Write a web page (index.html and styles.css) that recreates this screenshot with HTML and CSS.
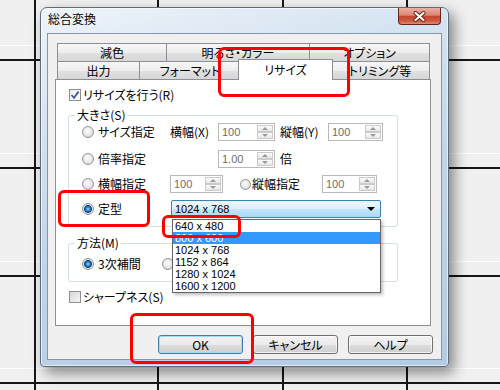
FILE: index.html
```html
<!DOCTYPE html>
<html lang="ja">

<head>
    <meta charset="UTF-8" />
    <meta name="viewport" content="width=device-width, initial-scale=1.0" />
    <title>総合変換</title>
    <link rel="stylesheet" href="styles.css">
</head>

<body>
    <div class="sheet">
        <div class="cell"></div><div class="cell"></div><div class="cell"></div><div class="cell"></div><div class="cell"></div>
        <div class="cell"></div><div class="cell"></div><div class="cell"></div><div class="cell"></div><div class="cell"></div>
        <div class="cell"></div><div class="cell"></div><div class="cell"></div><div class="cell"></div><div class="cell"></div>
        <div class="cell"></div><div class="cell"></div><div class="cell"></div><div class="cell"></div><div class="cell"></div>
        <div class="cell"></div><div class="cell"></div><div class="cell"></div><div class="cell"></div><div class="cell"></div>
    </div>

    <div class="dialog">
        <div class="titlebar">
            <span class="title">総合変換</span>
            <button class="close">
                <svg width="13" height="11" viewBox="0 0 13 11">
                    <path d="M2.5 2 L10.5 9 M10.5 2 L2.5 9" stroke="#5a2118" stroke-width="4" stroke-linecap="round" />
                    <path d="M2.5 2 L10.5 9 M10.5 2 L2.5 9" stroke="#fff" stroke-width="2.2" stroke-linecap="round" />
                </svg>
            </button>
        </div>

        <div class="client">
            <div class="tabs">
                <div class="tab-row">
                    <div class="tab t-gen">減色</div>
                    <div class="tab t-bright">明るさ・カラー</div>
                    <div class="tab t-opt">オプション</div>
                </div>
                <div class="tab-row">
                    <div class="tab t-out">出力</div>
                    <div class="tab t-fmt">フォーマット</div>
                    <div class="tab t-resize active">リサイズ</div>
                    <div class="tab t-trim">トリミング等</div>
                </div>
            </div>

            <div class="panel">
                <label class="check">
                    <span class="box on">
                        <svg width="10" height="10" viewBox="0 0 10 10">
                            <path d="M1.5 5 L4 7.8 L8.6 1.6" fill="none" stroke="#3d5a9e" stroke-width="1.8" />
                        </svg>
                    </span>
                    リサイズを行う(R)
                </label>

                <fieldset class="group group-size">
                    <legend>大きさ(S)</legend>
                    <div class="rows">
                        <div class="row">
                            <span class="opt w88"><span class="radio"></span>サイズ指定</span>
                            <span class="cap w48">横幅(X)</span>
                            <span class="spin w57"><span class="val">100</span><span class="btns"><i class="up"></i><i class="down"></i></span></span>
                            <span class="cap w48 ml5">縦幅(Y)</span>
                            <span class="spin w55"><span class="val">100</span><span class="btns"><i class="up"></i><i class="down"></i></span></span>
                        </div>
                        <div class="row">
                            <span class="opt w136"><span class="radio"></span>倍率指定</span>
                            <span class="spin w57"><span class="val">1.00</span><span class="btns"><i class="up"></i><i class="down"></i></span></span>
                            <span class="cap ml5">倍</span>
                        </div>
                        <div class="row">
                            <span class="opt w88"><span class="radio"></span>横幅指定</span>
                            <span class="spin w53"><span class="val">100</span><span class="btns"><i class="up"></i><i class="down"></i></span></span>
                            <span class="opt tight w82 ml17"><span class="radio small"></span>縦幅指定</span>
                            <span class="spin w55"><span class="val">100</span><span class="btns"><i class="up"></i><i class="down"></i></span></span>
                        </div>
                        <div class="row">
                            <span class="opt w89"><span class="radio on"></span>定型</span>
                            <div class="combo">
                                <span>1024 x 768</span>
                                <span class="arrow"></span>
                                <ul class="list">
                                    <li>640 x 480</li>
                                    <li class="selected">800 x 600</li>
                                    <li>1024 x 768</li>
                                    <li>1152 x 864</li>
                                    <li>1280 x 1024</li>
                                    <li>1600 x 1200</li>
                                </ul>
                            </div>
                        </div>
                    </div>
                </fieldset>

                <fieldset class="group group-method">
                    <legend>方法(M)</legend>
                    <div class="rows">
                        <div class="row">
                            <span class="opt w80"><span class="radio on"></span>3次補間</span>
                            <!-- second option sits under the open list -->
                            <span class="radio"></span>
                        </div>
                    </div>
                </fieldset>

                <label class="check check-sharp">
                    <span class="box"></span>
                    シャープネス(S)
                </label>
            </div>

            <div class="actions">
                <button class="btn default">OK</button>
                <button class="btn">キャンセル</button>
                <button class="btn">ヘルプ</button>
            </div>
        </div>
    </div>

    <!-- red annotation frames -->
    <div class="mark mark-tab"></div>
    <div class="mark mark-fixed"></div>
    <div class="mark mark-item"></div>
    <div class="mark mark-ok"></div>
</body>

</html>
```

FILE: styles.css
```css
body {
    margin: 0;
    width: 500px;
    height: 390px;
    overflow: hidden;
    background-color: #f0f0f0;
    font-family: "Noto Sans CJK JP", sans-serif;
    font-size: 12px;
    font-feature-settings: "palt";
    color: #000;
}

/* spreadsheet behind the dialog */
.sheet {
    display: grid;
    width: 500px;
    height: 390px;
    grid-template-columns: 36px 123px 125px 124px 1fr;
    grid-template-rows: 61px 108px 108px 107px 1fr;
}

.cell {
    border-right: 2px solid #161616;
    border-bottom: 2px solid #161616;
    background: linear-gradient(to top, transparent 13px, #fdfdfd 13px, #fdfdfd 14px, transparent 14px);
}

.cell:nth-child(5n) {
    border-right: none;
}

.cell:nth-child(n+21) {
    border-bottom: none;
    background: none;
}

/* window */
.dialog {
    position: absolute;
    left: 40px;
    top: 7px;
    width: 409px;
    height: 360px;
    box-sizing: border-box;
    padding: 0 6px 6px 6px;
    display: flex;
    flex-direction: column;
    border: 1px solid #5d6d7e;
    border-radius: 7px 7px 4px 4px;
    background: linear-gradient(165deg, #eef4fa 0%, #d5e3f1 25%, #c0d5ea 55%, #b3cbe4 100%);
    box-shadow: 5px 6px 14px rgba(0, 0, 0, 0.45), inset 0 0 0 1px rgba(255, 255, 255, 0.6);
}

.titlebar {
    display: flex;
    align-items: flex-start;
    height: 25px;
    flex: none;
}

.title {
    margin: 1px 0 0 1px;
    line-height: 20px;
    text-shadow: 0 0 6px #fff;
}

.close {
    margin-left: auto;
    margin-right: 1px;
    width: 43px;
    height: 17px;
    padding: 0;
    display: flex;
    align-items: center;
    justify-content: center;
    border: 1px solid #5e261d;
    border-top: none;
    border-radius: 0 0 4px 4px;
    background: linear-gradient(#eab0a3 0%, #dc8573 45%, #c5452f 52%, #cf573c 80%, #e58a6c 100%);
}

.client {
    flex: 1;
    display: flex;
    flex-direction: column;
    padding: 9px 10px 0 7px;
    border: 1px solid #8797a8;
    background: #f0f0f0;
}

/* tabs */
.tab-row {
    display: flex;
    height: 18px;
    margin-left: 2px;
}

.tab {
    box-sizing: border-box;
    height: 18px;
    margin-left: -1px;
    border: 1px solid #8c8f95;
    border-bottom: none;
    line-height: 17px;
    text-align: center;
    white-space: nowrap;
    background: linear-gradient(#f7f7f7, #ededed 50%, #e1e1e1 52%, #d7d7d7);
}

.tab:first-child {
    margin-left: 0;
}

.t-gen { width: 110px; }
.t-bright { width: 144px; }
.t-opt { width: 121px; }
.t-out { width: 83px; }
.t-fmt { width: 102px; }
.t-trim { width: 100px; margin-left: -1px; }

.tab.active {
    position: relative;
    z-index: 2;
    width: 95px;
    height: 21px;
    margin: -2px -2px -1px -3px;
    line-height: 20px;
    background: #fff;
}

.panel {
    height: 247px;
    box-sizing: border-box;
    padding: 8px 0 0 12px;
    border: 1px solid #8c8f95;
    background: #fff;
}

/* checkbox and radio */
.check {
    display: flex;
    align-items: center;
    gap: 2px;
    margin-left: 1px;
    line-height: 14px;
}

.check-sharp {
    margin-top: 8px;
}

.box {
    flex: none;
    width: 12px;
    height: 12px;
    box-sizing: border-box;
    display: flex;
    align-items: center;
    justify-content: center;
    border: 1px solid #8e8f8f;
    background: linear-gradient(135deg, #d6d6d6, #f7f7f7);
}

.box.on {
    background: linear-gradient(135deg, #ececec, #fff);
}

.radio {
    flex: none;
    width: 12px;
    height: 12px;
    box-sizing: border-box;
    border-radius: 50%;
    border: 1px solid #959595;
    background: radial-gradient(circle at 45% 40%, #fdfdfd 0, #ebebeb 45%, #cdcdcd 100%);
}

.radio.small {
    width: 11px;
    height: 11px;
}

.radio.on {
    background: radial-gradient(circle, #9edaff 0, #2583d2 2px, #0d4277 3.6px, #e8e8e8 4.2px, #cfcfcf 100%);
}

/* group boxes */
.group {
    width: 330px;
    box-sizing: border-box;
    margin: 6px 0 0 0;
    padding: 1px 0 8px 6px;
    border: 1px solid #d3dde4;
    border-radius: 3px;
}

.group legend {
    padding: 0 2px;
    line-height: 14px;
}

.group-method {
    margin-top: 9px;
    padding-top: 5px;
}

.rows {
    padding-left: 7px;
}

.row {
    display: flex;
    align-items: center;
    height: 18px;
    line-height: 18px;
    white-space: nowrap;
}

.row + .row {
    margin-top: 7px;
}

.row:nth-child(2) {
    margin-top: 9px;
}

.opt {
    display: flex;
    align-items: center;
    gap: 4px;
}

.opt.tight {
    gap: 1px;
}

.w48 { width: 48px; }
.w53 { width: 53px; }
.w55 { width: 55px; }
.w57 { width: 57px; }
.w80 { width: 80px; }
.w82 { width: 82px; }
.w88 { width: 88px; }
.w89 { width: 89px; }
.w136 { width: 136px; }
.ml5 { margin-left: 5px; }
.ml17 { margin-left: 17px; }

/* spin boxes */
.spin {
    display: flex;
    height: 18px;
    box-sizing: border-box;
    border: 1px solid #b9b9b9;
    background: #fff;
}

.val {
    flex: 1;
    padding-left: 3px;
    font: 11px/16px "Liberation Sans", sans-serif;
    color: #6d6d6d;
}

.btns {
    display: flex;
    flex-direction: column;
    width: 16px;
    padding: 1px 1px 1px 0;
}

.btns i {
    flex: 1;
    display: flex;
    align-items: center;
    justify-content: center;
    border: 1px solid #cbcbcb;
    background: linear-gradient(#fbfbfb, #e7e7e7);
}

.btns i::after {
    content: "";
    border-left: 3px solid transparent;
    border-right: 3px solid transparent;
}

.btns .up::after {
    border-bottom: 3px solid #9a9a9a;
}

.btns .down::after {
    border-top: 3px solid #9a9a9a;
}

/* combo box with open list */
.combo {
    position: relative;
    display: flex;
    align-items: center;
    width: 210px;
    height: 18px;
    box-sizing: border-box;
    padding-left: 3px;
    border: 1px solid #3c7fb1;
    border-radius: 2px;
    font: 11px/16px "Liberation Sans", sans-serif;
    background: linear-gradient(#ecf7fd, #dcf1fc 50%, #c2e7fc 52%, #a9d9f5);
}

.arrow {
    margin-left: auto;
    margin-right: 5px;
    border-left: 4px solid transparent;
    border-right: 4px solid transparent;
    border-top: 4px solid #000;
}

.list {
    position: absolute;
    left: 0;
    top: 18px;
    z-index: 3;
    width: 207px;
    margin: 0;
    padding: 0;
    list-style: none;
    border: 1px solid #646464;
    background: #fff;
    box-shadow: 2px 2px 3px rgba(0, 0, 0, 0.25);
}

.list li {
    padding-left: 2px;
    height: 12px;
    line-height: 12px;
}

.list .selected {
    background: #3399ff;
    color: #fff;
}

/* dialog buttons */
.actions {
    display: flex;
    justify-content: flex-end;
    gap: 10px;
    margin: 9px -2px 0 0;
}

.btn {
    width: 85px;
    height: 19px;
    padding: 0;
    font-family: "Noto Sans CJK JP", sans-serif;
    font-size: 12px;
    font-feature-settings: "palt";
    line-height: 17px;
    color: #000;
    border: 1px solid #707070;
    border-radius: 3px;
    background: linear-gradient(#f3f3f3, #ebebeb 50%, #dddddd 52%, #cfcfcf);
    box-shadow: inset 0 0 0 1px rgba(255, 255, 255, 0.7);
}

.btn.default {
    border-color: #3c7fb1;
    box-shadow: inset 0 0 0 1px #9fdcfb;
}

/* red annotation frames */
.mark {
    position: absolute;
    z-index: 10;
    box-sizing: border-box;
    border: 3px solid #f00;
    border-radius: 6px;
}

.mark-tab {
    left: 218px;
    top: 47px;
    width: 132px;
    height: 50px;
}

.mark-fixed {
    left: 58px;
    top: 190px;
    width: 92px;
    height: 37px;
}

.mark-item {
    left: 162px;
    top: 215px;
    width: 79px;
    height: 23px;
}

.mark-ok {
    left: 130px;
    top: 313px;
    width: 124px;
    height: 51px;
}
```
